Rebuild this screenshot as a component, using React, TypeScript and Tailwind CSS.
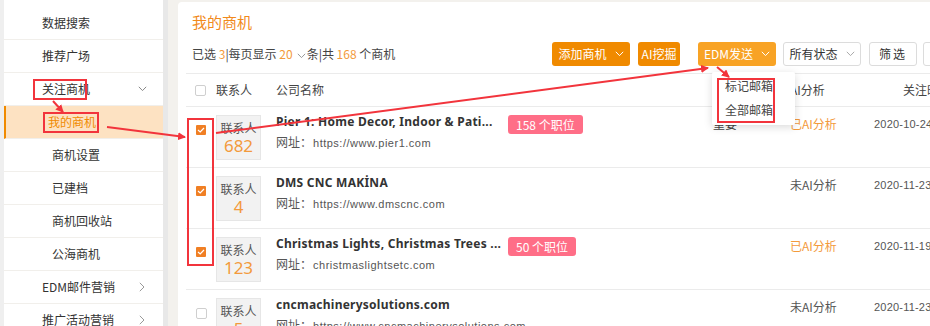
import React from "react";

const side = [
  { t: "数据搜索", lvl: 0 },
  { t: "推荐广场", lvl: 0 },
  { t: "关注商机", lvl: 0, down: true },
  { t: "我的商机", lvl: 1, active: true },
  { t: "商机设置", lvl: 1 },
  { t: "已建档", lvl: 1 },
  { t: "商机回收站", lvl: 1 },
  { t: "公海商机", lvl: 1 },
  { t: "EDM邮件营销", lvl: 0, right: true },
  { t: "推广活动营销", lvl: 0, right: true },
];

const rows = [
  { checked: true, n: "682", name: "Pier 1: Home Decor, Indoor & Pati...", badge: "158 个职位", url: "https://www.pier1.com", level: "重要", ai: true, date: "2020-10-24" },
  { checked: true, n: "4", name: "DMS CNC MAKİNA", url: "https://www.dmscnc.com", level: "", ai: false, date: "2020-11-23" },
  { checked: true, n: "123", name: "Christmas Lights, Christmas Trees ...", badge: "50 个职位", url: "christmaslightsetc.com", level: "", ai: true, date: "2020-11-19" },
  { checked: false, n: "5", name: "cncmachinerysolutions.com", url: "https://www.cncmachinerysolutions.com", level: "", ai: false, date: "2020-11-23" },
];

function ChevDown({ c = "#999" }: { c?: string }) {
  return (
    <svg width="9" height="6" viewBox="0 0 9 6" className="shrink-0">
      <path d="M0.8 0.8 L4.5 4.6 L8.2 0.8" fill="none" stroke={c} strokeWidth="1" />
    </svg>
  );
}
function ChevRight() {
  return (
    <svg width="6" height="10" viewBox="0 0 6 10">
      <path d="M0.8 0.8 L5 5 L0.8 9.2" fill="none" stroke="#999" strokeWidth="1" />
    </svg>
  );
}
function Check({ on }: { on: boolean }) {
  if (on)
    return (
      <div className="w-[10px] h-[10px] rounded-[1px] bg-[#f07f24] flex items-center justify-center">
        <svg width="8" height="6" viewBox="0 0 8 6">
          <path d="M1 3 L3.2 5 L7 1" fill="none" stroke="#fff" strokeWidth="1.2" />
        </svg>
      </div>
    );
  return <div className="w-[11px] h-[11px] rounded-[2px] border border-[#cfcfcf] bg-white" />;
}

export default function App() {
  return (
    <div className="relative w-[930px] h-[326px] overflow-hidden bg-[#f3f1ed] flex font-['Noto_Sans_CJK_SC',sans-serif] text-[#333]">
      {/* Sidebar */}
      <div className="w-[4px] shrink-0 bg-[#efefef]" />
      <div className="w-[159px] shrink-0 bg-white pt-[7px]">
        {side.map((s, i) => (
          <div
            key={i}
            className={
              "h-[33px] flex items-center border-b border-[#f1efeb] text-[12px] " +
              (s.active ? "bg-[#fde2c2] border-l-2 border-l-[#f08a00] text-[#f08a00]" : "")
            }
          >
            <div className={s.lvl === 0 ? "pl-[38px] flex-1" : s.active ? "pl-[42px] flex-1" : "pl-[48px] flex-1"}>{s.t}</div>
            {s.down && (
              <div className="pr-[16px]">
                <ChevDown c="#888" />
              </div>
            )}
            {s.right && (
              <div className="pr-[18px] flex items-center">
                <ChevRight />
              </div>
            )}
          </div>
        ))}
      </div>
      <div className="w-[5px] shrink-0 bg-[#e8e8e8]" />
      <div className="w-[10px] shrink-0" />

      {/* Main */}
      <div className="w-[820px] shrink-0 mt-[2px] bg-white rounded-tl-[4px] flex flex-col">
        <div className="pl-[14px] pt-[10px] h-[31px] text-[15px] leading-[20px] text-[#f18a1c]">我的商机</div>
        <div className="flex items-center h-[24px] mt-[10px]">
          <div className="w-[374px] pl-[14px] text-[12px] text-[#444] whitespace-nowrap">
            已选 <span className="text-[#f39a3c]">3</span>|每页显示 <span className="text-[#f39a3c]">20</span>
            <span className="inline-block ml-[4px] mr-[1px] align-middle"><ChevDown c="#999" /></span>条|共 <span className="text-[#f39a3c]">168</span> 个商机
          </div>
          <div className="w-[78px] h-[24px] rounded-[3px] bg-[#f08a00] text-white text-[12px] flex items-center justify-center gap-[8px]">
            添加商机 <ChevDown c="#fff" />
          </div>
          <div className="ml-[8px] w-[42px] h-[24px] rounded-[3px] bg-[#f08a00] text-white text-[12px] flex items-center justify-center">AI挖掘</div>
          <div className="ml-[18px] w-[78px] h-[24px] rounded-[3px] bg-[#f8a325] text-white text-[12px] flex items-center justify-center gap-[8px]">
            EDM发送 <ChevDown c="#fff" />
          </div>
          <div className="ml-[7px] w-[78px] h-[24px] rounded-[3px] border border-[#dcdcdc] bg-white text-[#333] text-[12px] flex items-center justify-center gap-[8px]">
            所有状态 <ChevDown c="#aaa" />
          </div>
          <div className="ml-[8px] w-[48px] h-[24px] rounded-[3px] border border-[#dcdcdc] bg-white text-[#333] text-[12px] flex items-center justify-center tracking-[2px]">筛选</div>
          <div className="ml-[6px] w-[48px] h-[24px] rounded-[3px] border border-[#dcdcdc] bg-white" />
        </div>

        {/* Table */}
        <div className="ml-[8px] mt-[7px]">
          <div className="h-[34px] flex items-center border-t border-b border-[#ebebeb] text-[12px] text-[#444]">
            <div className="w-[30px] pl-[9px]"><Check on={false} /></div>
            <div className="w-[60px]">联系人</div>
            <div className="w-[437px]">公司名称</div>
            <div className="w-[77px]">分级</div>
            <div className="w-[84px]">AI分析</div>
            <div className="pl-[29px] whitespace-nowrap">关注时间</div>
          </div>
          {rows.map((r, i) => (
            <div key={i} className="h-[61px] flex items-start border-b border-[#ebebeb]">
              <div className="w-[30px] pl-[10px] pt-[18px]"><Check on={r.checked} /></div>
              <div className="w-[60px] pt-[8px]">
                <div className="w-[45px] h-[45px] bg-[#f2f2f2] border border-[#e6e6e6] flex flex-col items-center">
                  <div className="text-[12px] leading-[16px] mt-[4px] text-[#555]">联系人</div>
                  <div className="text-[17px] leading-[20px] text-[#f39a3c] font-['Noto_Sans',sans-serif]">{r.n}</div>
                </div>
              </div>
              <div className="w-[437px] pt-[6px]">
                <div className="flex items-start h-[18px]">
                  <div className="w-[232px] overflow-hidden whitespace-nowrap text-[12px] leading-[18px] font-bold tracking-[0.25px] text-[#333] font-['Noto_Sans',sans-serif]">{r.name}</div>
                  {r.badge && (
                    <div className="mt-[2px] h-[19px] px-[8px] rounded-[3px] bg-[#ff6e87] text-white text-[12px] leading-[19px] whitespace-nowrap">{r.badge}</div>
                  )}
                </div>
                <div className="mt-[2px] text-[12px] leading-[18px] text-[#555] whitespace-nowrap">
                  网址：<span className="ml-[1px] text-[11px] tracking-[0.5px] font-['Liberation_Sans',sans-serif]">{r.url}</span>
                </div>
              </div>
              <div className="w-[77px] pt-[8px] text-[12px] leading-[18px] text-[#444]">{r.level}</div>
              <div className={"w-[84px] pt-[8px] text-[12px] leading-[18px] " + (r.ai ? "text-[#f39a3c]" : "text-[#555]")}>
                {r.ai ? "已AI分析" : "未AI分析"}
              </div>
              <div className="pt-[8px] text-[11px] leading-[18px] tracking-[0.2px] text-[#555] whitespace-nowrap font-['Liberation_Sans',sans-serif]">{r.date}</div>
            </div>
          ))}
        </div>
      </div>

      {/* Dropdown */}
      <div className="absolute left-[712px] top-[72px] w-[83px] h-[53px] bg-white rounded-[2px] shadow-[0_2px_8px_rgba(0,0,0,0.15)] text-[12px] text-[#444]">
        <div className="pl-[13px] pt-[5px] leading-[18px]">标记邮箱</div>
        <div className="pl-[13px] pt-[6px] leading-[18px]">全部邮箱</div>
      </div>

      {/* Annotations */}
      <svg className="absolute left-0 top-0 pointer-events-none" width="930" height="326" viewBox="0 0 930 326">
        <defs>
          <marker id="ah" markerWidth="8" markerHeight="8" refX="7" refY="4" orient="auto" markerUnits="userSpaceOnUse">
            <path d="M0 0 L8 4 L0 8 Z" fill="#f2343c" />
          </marker>
        </defs>
        <g fill="none" stroke="#f2343c" strokeWidth="2">
          <rect x="34" y="80" width="52" height="19" />
          <rect x="44" y="113" width="54" height="19" />
          <rect x="188" y="119" width="25" height="146" />
          <rect x="718" y="79" width="56" height="43" />
          <line x1="53" y1="101" x2="63" y2="112" markerEnd="url(#ah)" />
          <line x1="107" y1="127" x2="185" y2="137" markerEnd="url(#ah)" />
          <line x1="216" y1="133" x2="708" y2="68" markerEnd="url(#ah)" />
          <line x1="717" y1="67" x2="729" y2="77" markerEnd="url(#ah)" />
        </g>
      </svg>
    </div>
  );
}
